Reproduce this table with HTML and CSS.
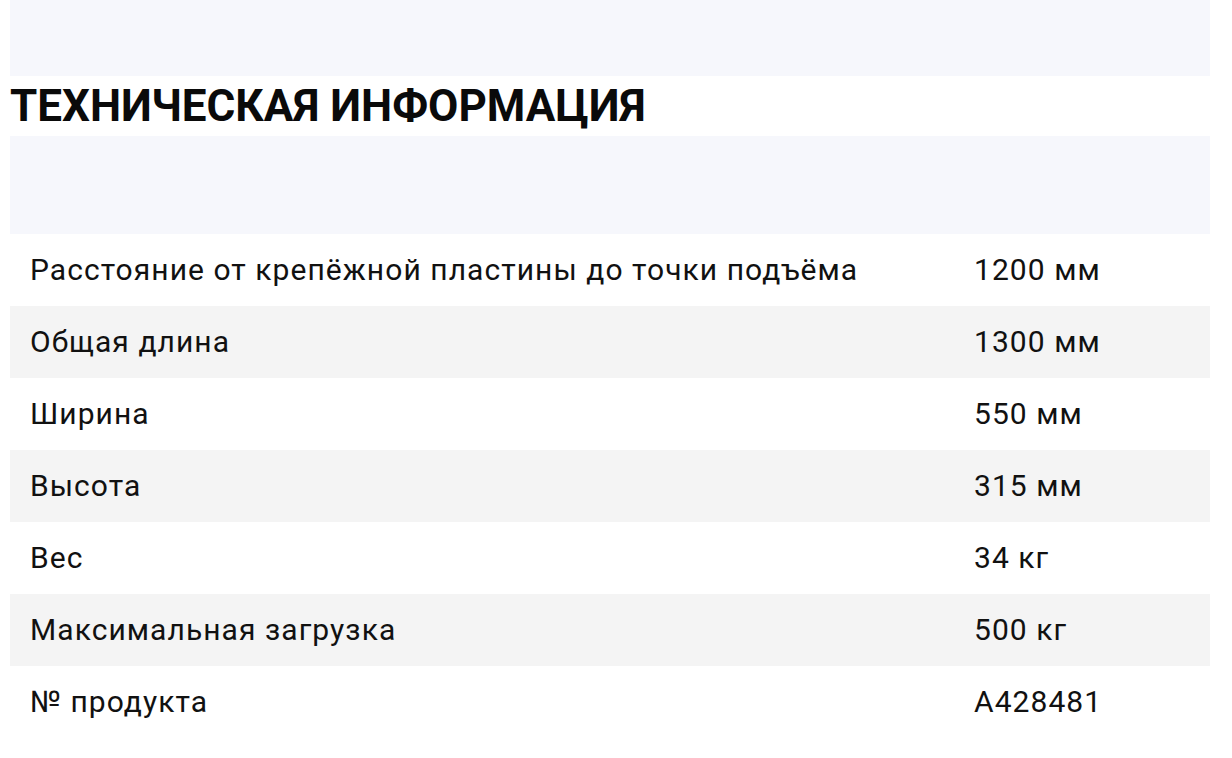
FILE: index.html
```html
<!DOCTYPE html>
<html lang="ru">
<head>
<meta charset="utf-8">
<link rel="stylesheet" href="styles.css">
</head>
<body>
<div class="page">
  <div class="top-band"></div>
  <h2 class="title">ТЕХНИЧЕСКАЯ ИНФОРМАЦИЯ</h2>
  <div class="specs">
    <div class="specs-head"></div>
    <div class="row"><div class="label">Расстояние от крепёжной пластины до точки подъёма</div><div class="value">1200 мм</div></div>
    <div class="row alt"><div class="label">Общая длина</div><div class="value">1300 мм</div></div>
    <div class="row"><div class="label">Ширина</div><div class="value">550 мм</div></div>
    <div class="row alt"><div class="label">Высота</div><div class="value">315 мм</div></div>
    <div class="row"><div class="label">Вес</div><div class="value">34 кг</div></div>
    <div class="row alt"><div class="label">Максимальная загрузка</div><div class="value">500 кг</div></div>
    <div class="row"><div class="label">№ продукта</div><div class="value">A428481</div></div>
  </div>
</div>
</body>
</html>
```

FILE: styles.css
```css
html, body {
  margin: 0;
  padding: 0;
  background: #ffffff;
}
body {
  font-family: Roboto, "Noto Sans", sans-serif;
  color: #111111;
}
.page {
  width: 1200px;
  margin: 0 10px;
}
.top-band {
  height: 76px;
  background: #f6f7fc;
}
.title {
  margin: 0;
  height: 60px;
  line-height: 60px;
  font-size: 44px;
  font-weight: 700;
  color: #0a0a0a;
  letter-spacing: 0;
}
.specs-head {
  height: 98px;
  background: #f6f7fc;
}
.row {
  display: grid;
  grid-template-columns: 944px 1fr;
  height: 72px;
  align-items: center;
}
.row.alt {
  background: #f4f4f4;
}
.label, .value {
  padding: 0 20px;
  font-size: 30px;
  line-height: 72px;
  letter-spacing: 1.06px;
}
```
